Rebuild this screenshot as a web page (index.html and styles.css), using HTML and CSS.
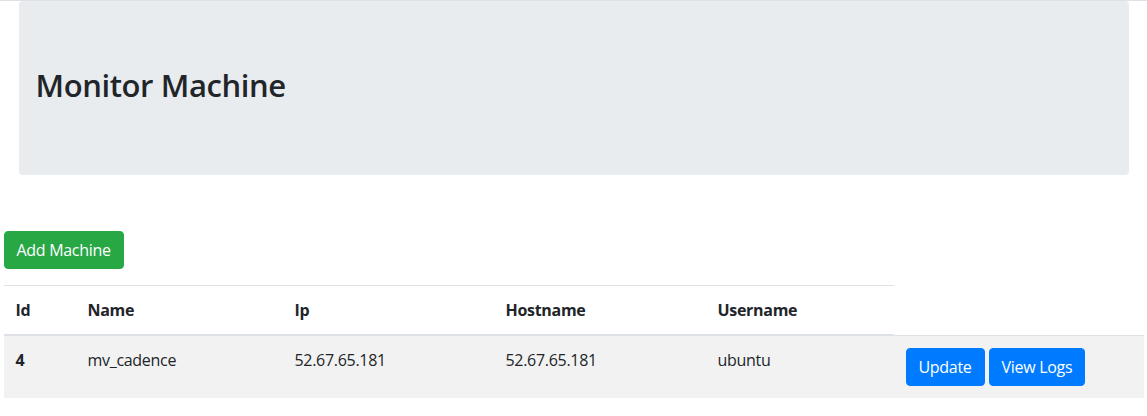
FILE: index.html
```html
<!DOCTYPE html>
<html lang="en">
<head>
<meta charset="utf-8">
<title>Monitor Machine</title>
<link rel="stylesheet" href="styles.css">
</head>
<body>
<div class="topline"></div>
<div class="container">
  <div class="jumbotron">
    <h2 class="title">Monitor Machine</h2>
  </div>
  <div class="row">
    <button class="btn btn-success">Add Machine</button>
    <table class="table">
      <thead>
        <tr>
          <th class="c-id">Id</th>
          <th class="c-name">Name</th>
          <th class="c-ip">Ip</th>
          <th class="c-host">Hostname</th>
          <th class="c-user">Username</th>
        </tr>
      </thead>
      <tbody>
        <tr class="striped">
          <td class="c-id strong">4</td>
          <td class="c-name">mv_cadence</td>
          <td class="c-ip">52.67.65.181</td>
          <td class="c-host">52.67.65.181</td>
          <td class="c-user">ubuntu</td>
          <td class="c-actions">
            <div class="actions">
              <button class="btn btn-primary">Update</button>
              <button class="btn btn-primary">View Logs</button>
            </div>
          </td>
        </tr>
      </tbody>
    </table>
  </div>
</div>
</body>
</html>
```
FILE: styles.css
```css
* { box-sizing: border-box; }
html, body {
  margin: 0;
  padding: 0;
  background: #fff;
}
body {
  font-family: "Open Sans", "Noto Sans", "Liberation Sans", sans-serif;
  font-size: 16px;
  line-height: 1.5;
  letter-spacing: -0.3px;
  color: #212529;
}
.topline {
  height: 1px;
  background: #dee2e6;
}
.container {
  width: 1140px;
  margin: 0 auto;
  padding: 0 15px;
}
.jumbotron {
  background: #e9ecef;
  border-radius: 4px;
  padding: 64px 16px 64px 17px;
  margin-bottom: 56px;
}
.title {
  margin: 0 0 7px;
  padding-top: 1px;
  font-size: 31px;
  font-weight: 600;
  line-height: 38px;
  letter-spacing: -0.4px;
}
.row {
  margin: 0 -15px;
}
.btn {
  display: inline-block;
  font-family: inherit;
  font-size: 16px;
  line-height: 24px;
  letter-spacing: -0.3px;
  padding: 6px 12px;
  border: 1px solid transparent;
  border-radius: 4px;
  color: #fff;
  cursor: pointer;
}
.btn-success {
  background: #28a745;
  border-color: #28a745;
  margin-bottom: 16px;
}
.btn-primary {
  background: #007bff;
  border-color: #007bff;
}
.table {
  width: 1140px;
  border-collapse: collapse;
  table-layout: fixed;
}
.table th, .table td {
  padding: 12px;
  text-align: left;
  vertical-align: top;
  border-top: 1px solid #dee2e6;
  white-space: nowrap;
}
.table th {
  font-weight: 700;
  border-bottom: 2px solid #dee2e6;
}
.striped {
  background: #f2f2f2;
}
.strong { font-weight: 700; }
.c-id { width: 72px; }
.c-name { width: 207px; }
.c-ip { width: 211px; }
.c-host { width: 212px; }
.c-user { width: 188px; }
.c-actions { width: 250px; }
.actions {
  display: flex;
  gap: 4px;
}
```
